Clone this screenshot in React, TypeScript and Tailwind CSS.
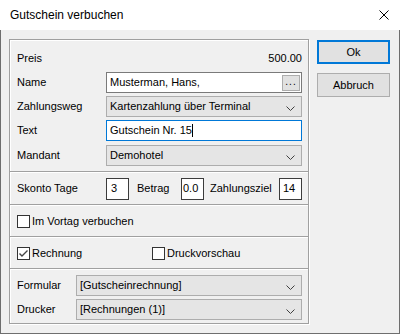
import React from "react";

const Chevron = () => (
  <svg width="9" height="5" viewBox="0 0 9 5" className="absolute right-[6px] top-1/2 -translate-y-[1px]">
    <polyline points="0.5,0.5 4.5,4.5 8.5,0.5" fill="none" stroke="#404040" strokeWidth="1" />
  </svg>
);

const Combo = ({ text, w }: { text: string; w: string }) => (
  <div className={`relative ${w} h-[21px] bg-[#e5e5e5] border border-[#adadad] flex items-center pl-[3px]`}>
    <span>{text}</span>
    <Chevron />
  </div>
);

const Check = ({ checked }: { checked?: boolean }) => (
  <div className="w-[13px] h-[13px] border border-[#333333] bg-white flex items-center justify-center shrink-0">
    {checked && (
      <svg width="11" height="11" viewBox="0 0 11 11">
        <polyline points="1.5,5.5 4,8 9.5,2.5" fill="none" stroke="#444" strokeWidth="1.4" />
      </svg>
    )}
  </div>
);

const Sep = () => <div className="h-[2px] border-t border-b border-t-[#a0a0a0] border-b-white" />;

export default function App() {
  return (
    <div className="w-[400px] h-[334px] bg-white font-['Liberation_Sans',Arial,sans-serif] text-[11px] text-black leading-none">
      <div className="h-[30px] flex items-center justify-between pl-[10px] pr-[11px]">
        <span className="text-[12px]">Gutschein verbuchen</span>
        <svg width="10" height="10" viewBox="0 0 10 10">
          <path d="M0.5 0.5 L9.5 9.5 M9.5 0.5 L0.5 9.5" stroke="#000" strokeWidth="1" />
        </svg>
      </div>
      <div className="h-[304px] bg-[#f0f0f0] border-l border-r border-b border-[#6e6e6e] flex pl-[8px] pt-[9px]">
        <div className="w-[300px] h-[285px] border border-[#a0a0a0] shadow-[inset_1px_1px_0_#fff,1px_1px_0_#fff] flex flex-col">
          <div className="h-[131px] pt-[8px] pl-[7px] pr-[6px] flex flex-col gap-[3px]">
            <div className="h-[21px] flex items-center justify-between">
              <span>Preis</span>
              <span>500.00</span>
            </div>
            <div className="h-[21px] flex items-center">
              <span className="w-[89px]">Name</span>
              <div className="relative w-[196px] h-[21px] bg-white border border-[#7a7a7a] flex items-center pl-[3px]">
                <span>Musterman, Hans,</span>
                <div className="absolute right-[1px] top-[2px] w-[18px] h-[16px] bg-[#e1e1e1] border border-[#adadad] flex items-end justify-center pb-[3px] text-[10px] tracking-[1px]">
                  ...
                </div>
              </div>
            </div>
            <div className="h-[21px] flex items-center">
              <span className="w-[89px]">Zahlungsweg</span>
              <Combo text="Kartenzahlung über Terminal" w="w-[196px]" />
            </div>
            <div className="h-[21px] flex items-center">
              <span className="w-[89px]">Text</span>
              <div className="w-[196px] h-[21px] bg-white border border-[#0078d7] flex items-center pl-[3px]">
                <span>Gutschein Nr. 15</span>
                <span className="w-[1px] h-[13px] bg-black" />
              </div>
            </div>
            <div className="h-[21px] flex items-center mt-[1px]">
              <span className="w-[89px]">Mandant</span>
              <Combo text="Demohotel" w="w-[196px]" />
            </div>
          </div>
          <Sep />
          <div className="h-[31px] flex items-center pl-[7px]">
            <span className="w-[89px]">Skonto Tage</span>
            <div className="w-[23px] h-[22px] bg-white border border-[#3c3c3c] flex items-center pl-[4px]">3</div>
            <span className="w-[44px] ml-[8px]">Betrag</span>
            <div className="w-[23px] h-[22px] bg-white border border-[#3c3c3c] flex items-center pl-[1px] overflow-hidden">0.0</div>
            <span className="w-[69px] ml-[6px]">Zahlungsziel</span>
            <div className="w-[23px] h-[22px] bg-white border border-[#3c3c3c] flex items-center pl-[3px]">14</div>
          </div>
          <Sep />
          <div className="h-[30px] flex items-center pl-[7px] gap-[2px]">
            <Check />
            <span>Im Vortag verbuchen</span>
          </div>
          <Sep />
          <div className="h-[30px] flex items-center pl-[7px]">
            <div className="w-[135px] flex items-center gap-[2px]">
              <Check checked />
              <span>Rechnung</span>
            </div>
            <div className="flex items-center gap-[2px]">
              <Check />
              <span>Druckvorschau</span>
            </div>
          </div>
          <Sep />
          <div className="flex-1 pt-[5px] pl-[7px] pr-[6px] flex flex-col gap-[3px]">
            <div className="h-[21px] flex items-center">
              <span className="w-[59px]">Formular</span>
              <Combo text="[Gutscheinrechnung]" w="w-[226px]" />
            </div>
            <div className="h-[21px] flex items-center">
              <span className="w-[59px]">Drucker</span>
              <Combo text="[Rechnungen (1)]" w="w-[226px]" />
            </div>
          </div>
        </div>
        <div className="ml-[8px] mt-[1px] flex flex-col gap-[9px]">
          <div className="w-[73px] h-[24px] bg-[#e1e1e1] border-2 border-[#0078d7] flex items-center justify-center">Ok</div>
          <div className="w-[73px] h-[24px] bg-[#e1e1e1] border border-[#adadad] flex items-center justify-center">Abbruch</div>
        </div>
      </div>
    </div>
  );
}
